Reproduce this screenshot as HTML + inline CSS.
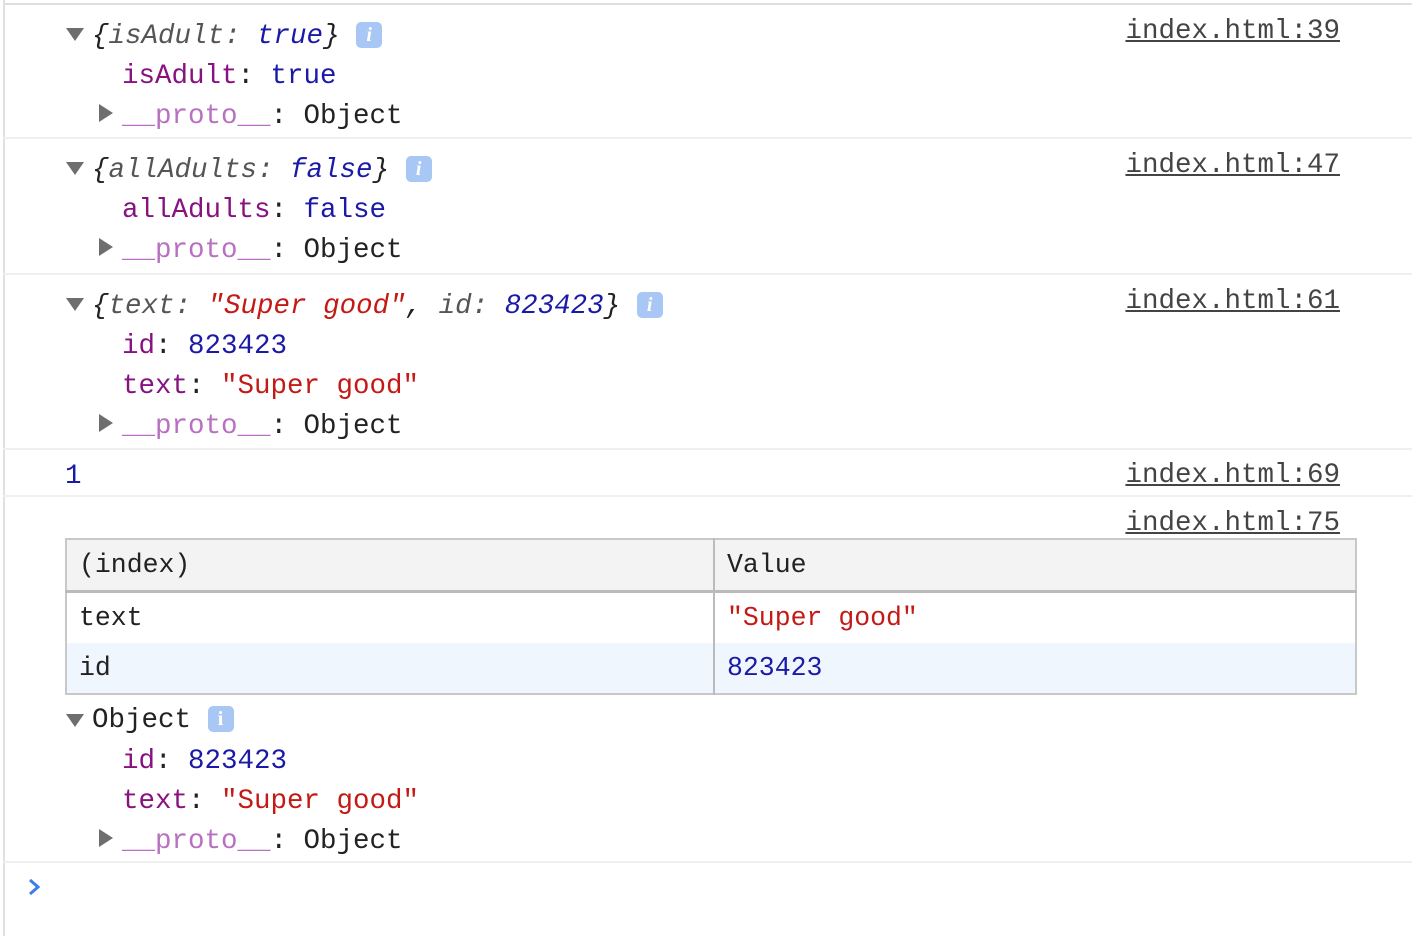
<!DOCTYPE html><html><head><style>
body{margin:0;width:1412px;height:936px;background:#fff;position:relative;overflow:hidden;font-family:"Liberation Mono",monospace;font-size:27.5px;color:#222}
.l{position:absolute;white-space:pre;line-height:40px;height:40px}
.sep{position:absolute;left:3px;right:0;height:2px;background:#efefef}
.lk{position:absolute;right:72px;line-height:40px;text-decoration:underline;color:#444;font-size:27.5px}
.tri{position:absolute;width:0;height:0}
.down{border-left:9px solid transparent;border-right:9px solid transparent;border-top:13px solid #6e6e6e}
.right{border-top:9px solid transparent;border-bottom:9px solid transparent;border-left:14px solid #6e6e6e}
.i{display:inline-block;width:26px;height:26px;background:#a9c7f5;border-radius:5px;color:#fff;font-size:20px;text-align:center;line-height:26px;font-style:italic;vertical-align:2px;font-family:"Liberation Serif",serif;font-weight:bold}
.k{color:#881280}.p{color:#b871c0}.b{color:#1a1aa6}.s{color:#c41a16}.g{color:#555}
em{font-style:italic}
table{position:absolute;left:65px;top:538px;width:1292px;border-collapse:collapse;border:2px solid #c8c8c8;font-size:26.5px}
td{height:50px;padding:0 12px;border-right:2px solid #bbb}
</style></head><body>
<div style="position:absolute;left:3px;top:0;width:2px;height:936px;background:#e0e0e0"></div>
<div style="position:absolute;left:3px;top:3px;right:0;height:2px;background:#e0e0e0"></div>

<div class="tri down" style="left:66px;top:28px"></div>
<div class="l" style="left:92px;top:17px"><em>{<span class="g">isAdult: </span><span class="b">true</span>}</em> <span class="i">i</span></div>
<div class="lk" style="top:12px">index.html:39</div>
<div class="l" style="left:122px;top:57px"><span class="k">isAdult</span>: <span class="b">true</span></div>
<div class="tri right" style="left:99px;top:104px"></div>
<div class="l" style="left:122px;top:97px"><span class="p">__proto__</span>: Object</div>
<div class="sep" style="top:137px"></div>

<div class="tri down" style="left:66px;top:162px"></div>
<div class="l" style="left:92px;top:151px"><em>{<span class="g">allAdults: </span><span class="b">false</span>}</em> <span class="i">i</span></div>
<div class="lk" style="top:146px">index.html:47</div>
<div class="l" style="left:122px;top:191px"><span class="k">allAdults</span>: <span class="b">false</span></div>
<div class="tri right" style="left:99px;top:238px"></div>
<div class="l" style="left:122px;top:231px"><span class="p">__proto__</span>: Object</div>
<div class="sep" style="top:273px"></div>

<div class="tri down" style="left:66px;top:298px"></div>
<div class="l" style="left:92px;top:287px"><em>{<span class="g">text: </span><span class="s">"Super good"</span>, <span class="g">id: </span><span class="b">823423</span>}</em> <span class="i">i</span></div>
<div class="lk" style="top:282px">index.html:61</div>
<div class="l" style="left:122px;top:327px"><span class="k">id</span>: <span class="b">823423</span></div>
<div class="l" style="left:122px;top:367px"><span class="k">text</span>: <span class="s">"Super good"</span></div>
<div class="tri right" style="left:99px;top:414px"></div>
<div class="l" style="left:122px;top:407px"><span class="p">__proto__</span>: Object</div>
<div class="sep" style="top:448px"></div>

<div class="l b" style="left:65px;top:457px">1</div>
<div class="lk" style="top:456px">index.html:69</div>
<div class="sep" style="top:495px"></div>

<div class="lk" style="top:504px">index.html:75</div>
<table>
<tr style="background:#f3f3f3;border-bottom:3px solid #bbb"><td style="width:622px">(index)</td><td style="border-right:none">Value</td></tr>
<tr><td>text</td><td class="s" style="border-right:none">"Super good"</td></tr>
<tr style="background:#f0f6fe"><td>id</td><td class="b" style="border-right:none">823423</td></tr>
</table>
<div class="tri down" style="left:66px;top:714px"></div>
<div class="l" style="left:92px;top:701px">Object <span class="i" style="font-style:normal">i</span></div>
<div class="l" style="left:122px;top:742px"><span class="k">id</span>: <span class="b">823423</span></div>
<div class="l" style="left:122px;top:782px"><span class="k">text</span>: <span class="s">"Super good"</span></div>
<div class="tri right" style="left:99px;top:829px"></div>
<div class="l" style="left:122px;top:822px"><span class="p">__proto__</span>: Object</div>
<div class="sep" style="top:861px"></div>
<svg style="position:absolute;left:27px;top:878px" width="16" height="18"><path d="M3 2 L11 9 L3 16" fill="none" stroke="#3b7ee8" stroke-width="3"/></svg>
</body></html>
